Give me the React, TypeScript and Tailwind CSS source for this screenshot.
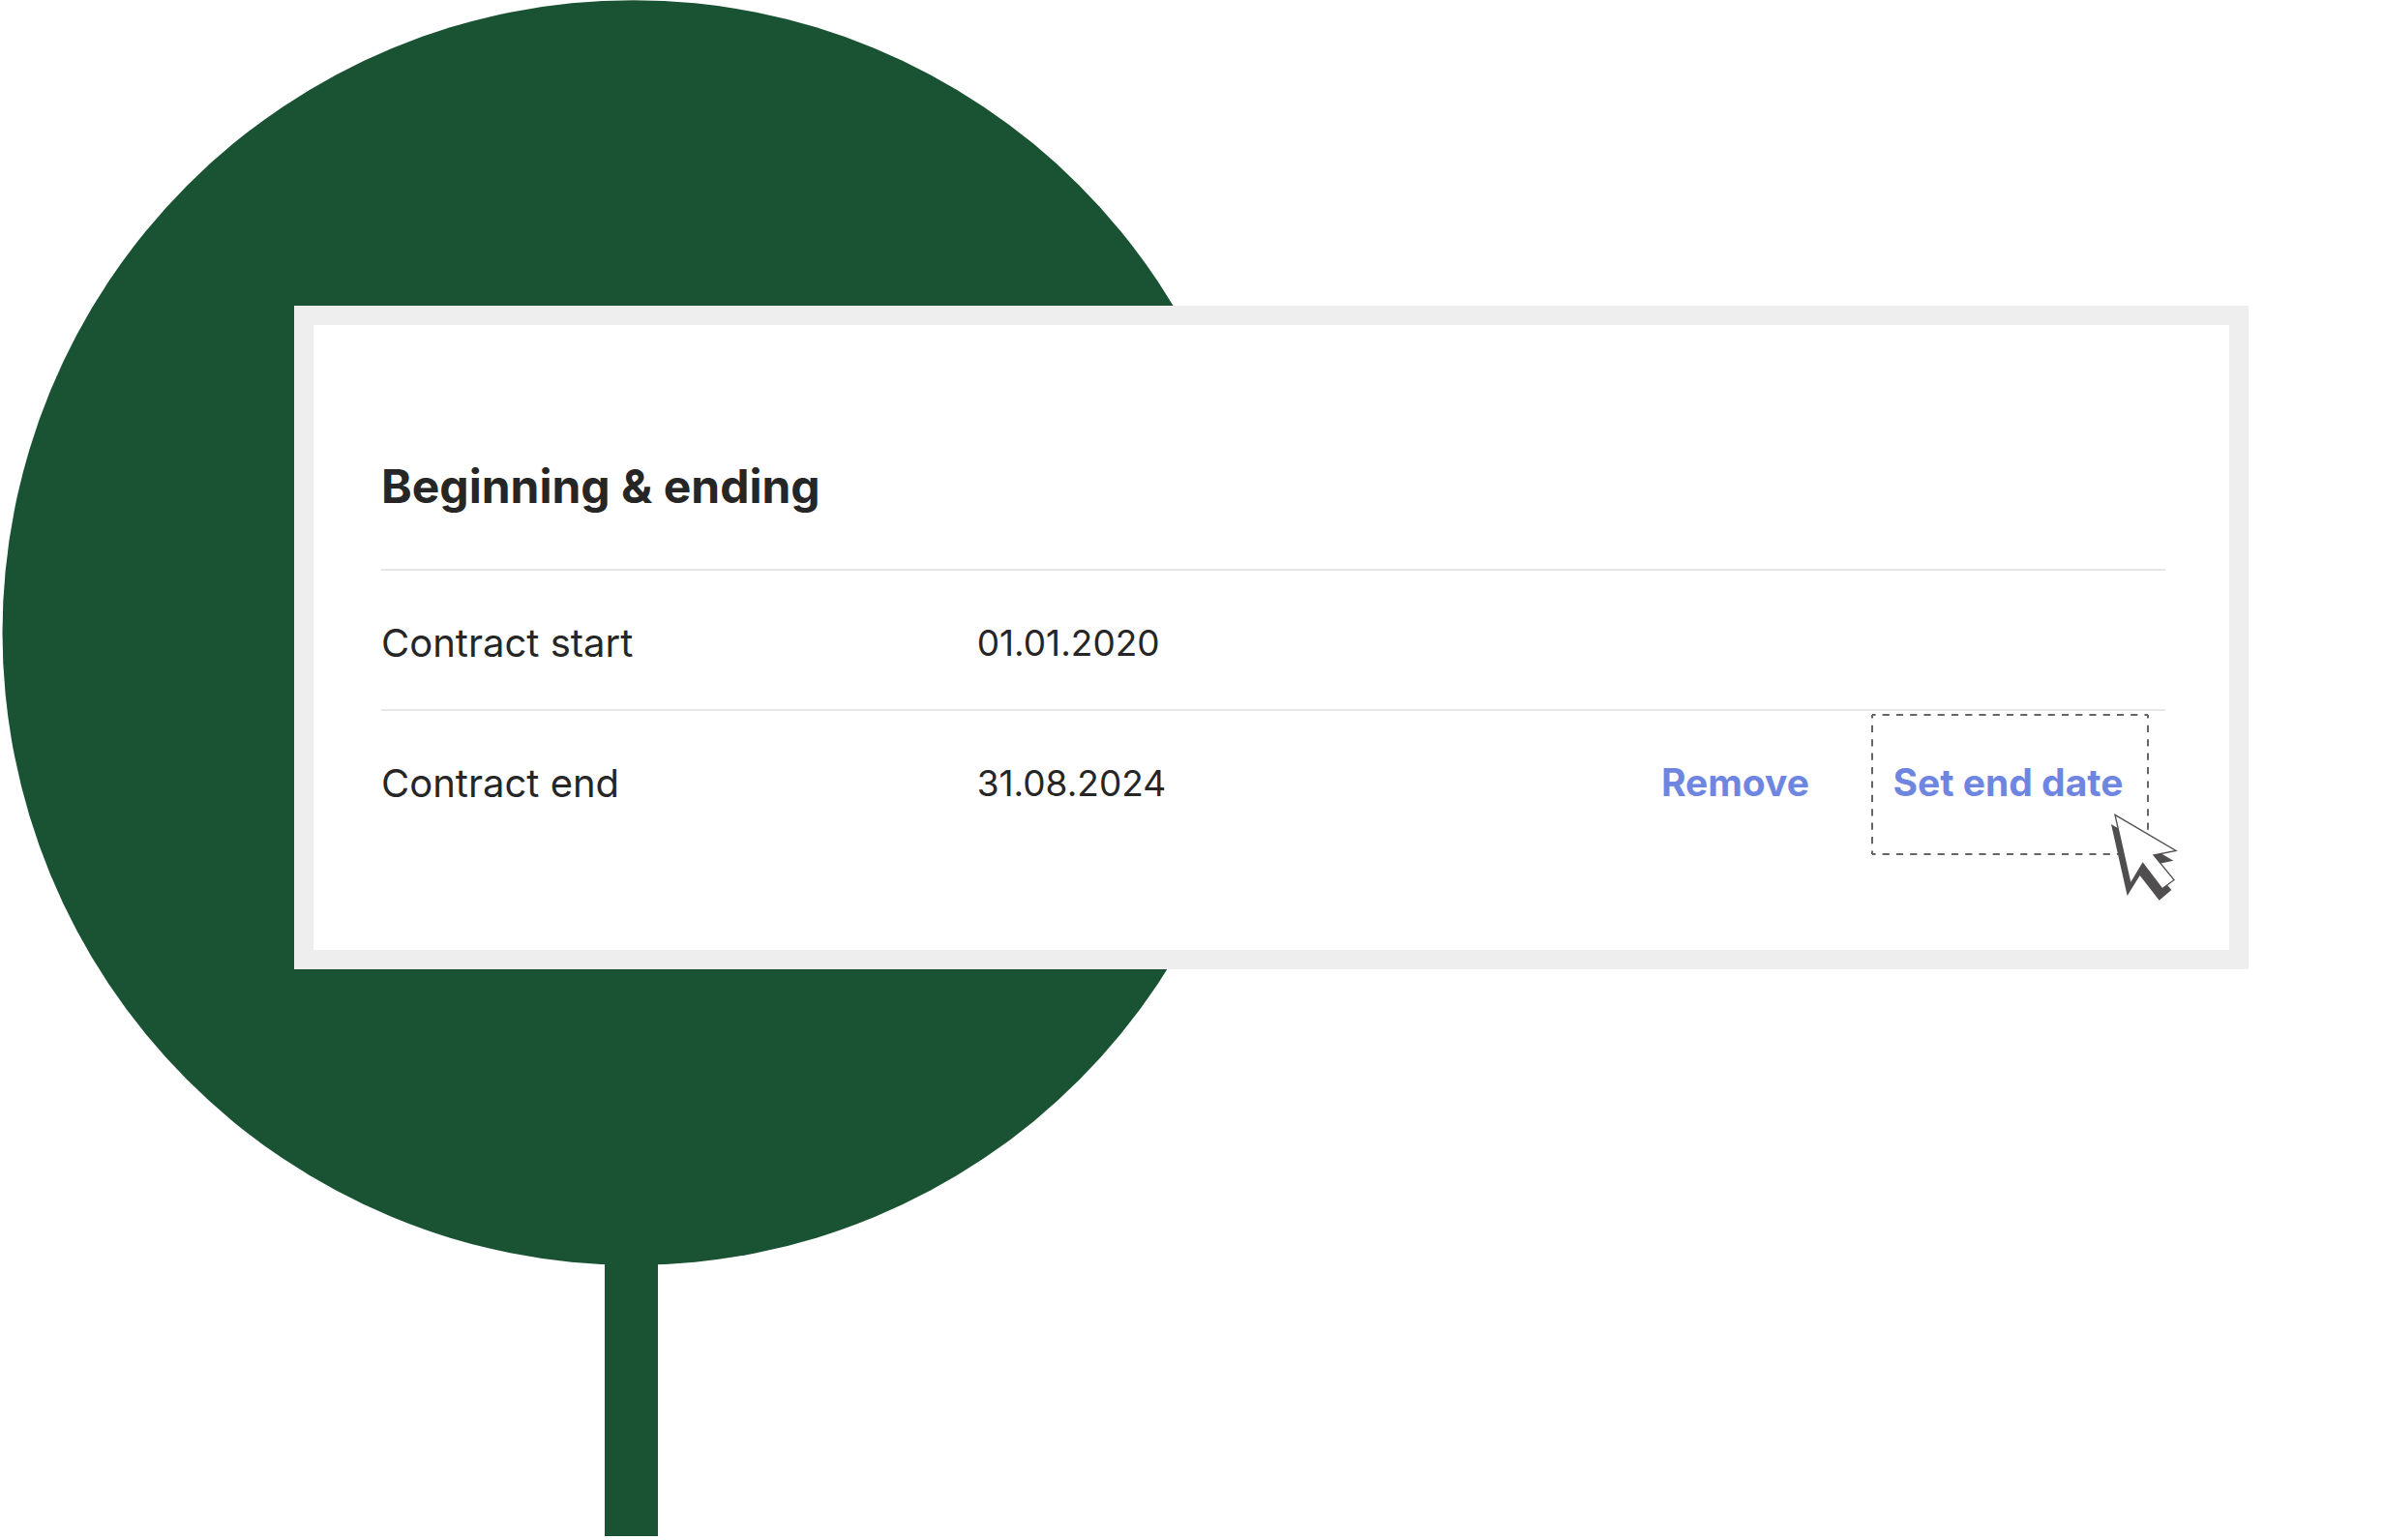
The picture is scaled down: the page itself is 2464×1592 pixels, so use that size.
import type { ReactNode } from 'react';

type Contract = {
    label: string;
    date: string;
    actions?: ReactNode;
};

const contracts: Contract[] = [
    { label: 'Contract start', date: '01.01.2020' },
    { label: 'Contract end', date: '31.08.2024', actions: <EndDateActions /> },
];

export default function App() {
    return (
        <main className="grid min-h-screen overflow-hidden bg-white font-['Inter',sans-serif] text-[#262626]">
            <Tree />
            <section className="relative col-start-1 row-start-1 mt-[316px] mr-[140px] mb-auto ml-[304px] border-20 border-[#eeeeee] bg-white pt-[137px] pr-[66px] pb-[98px] pl-[70px]">
                <h1 className="mb-[55px] text-5xl leading-[60px] font-bold">Beginning &amp; ending</h1>
                <table className="w-full table-fixed border-separate border-spacing-0 text-left text-[40px] leading-[60px]">
                    <tbody>
                        {contracts.map((contract) => (
                            <ContractRow key={contract.label} contract={contract} />
                        ))}
                    </tbody>
                </table>
            </section>
        </main>
    );
}

function ContractRow({ contract }: { contract: Contract }) {
    return (
        <tr className="h-[145px] align-top">
            <th scope="row" className="border-t-2 border-[#e6e6e6] p-0 pt-[45px] font-normal">
                {contract.label}
            </th>
            <td className="border-t-2 border-[#e6e6e6] p-0 pt-[45px] pl-px text-[37px]">{contract.date}</td>
            <td className="border-t-2 border-[#e6e6e6] p-0 pt-[3px]">{contract.actions}</td>
        </tr>
    );
}

function EndDateActions() {
    return (
        <div className="mr-[17px] flex justify-end gap-16 text-[39px] font-bold text-[#6f86e0]">
            <button type="button" className="cursor-pointer pb-1">
                Remove
            </button>
            <button type="button" className="relative h-[146px] w-[287px] cursor-pointer pr-1 pb-1">
                Set end date
                <DashedFrame />
                <Cursor />
            </button>
        </div>
    );
}

function DashedFrame() {
    return (
        <svg
            aria-hidden="true"
            className="absolute inset-px h-[calc(100%-2px)] w-[calc(100%-2px)] overflow-visible"
            stroke="#666465"
            strokeWidth="2"
            strokeDasharray="0.5 0.5"
            strokeDashoffset="0.25"
        >
            <line x1="0" y1="0" x2="100%" y2="0" pathLength={20} />
            <line x1="0" y1="100%" x2="100%" y2="100%" pathLength={20} />
            <line x1="0" y1="0" x2="0" y2="100%" pathLength={10} />
            <line x1="100%" y1="0" x2="100%" y2="100%" pathLength={10} />
        </svg>
    );
}

function Cursor() {
    return (
        <svg aria-hidden="true" viewBox="120 120 216 276" className="absolute top-[102px] -right-[31px] h-[92px] w-[72px]">
            <path d="M126 156 319 269 249 284 313 360 275 392 215 315 176 378Z" fill="#504e4f" />
            <path
                d="M138 127 327 238 258 252 321 329 284 356 224 277 186 341Z"
                fill="#ffffff"
                stroke="#504e4f"
                strokeWidth="4"
            />
        </svg>
    );
}

function Tree() {
    return (
        <svg
            aria-hidden="true"
            viewBox="0 0 1308 1588"
            className="col-start-1 row-start-1 h-[1588px] w-[1308px]"
            fill="#195333"
        >
            <ellipse cx="654.5" cy="654" rx="652" ry="653.8" />
            <rect x="625" y="1290" width="55" height="298" />
        </svg>
    );
}
